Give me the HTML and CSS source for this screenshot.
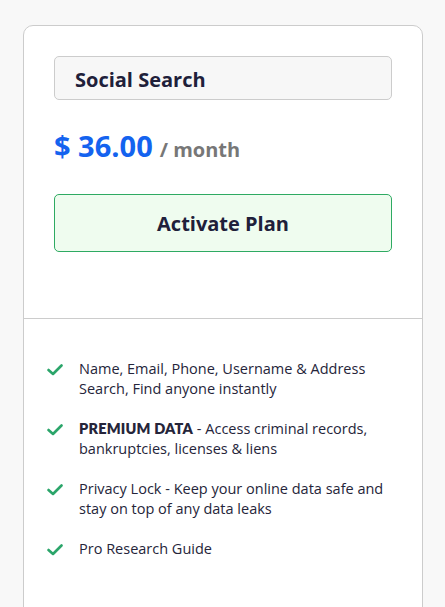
FILE: index.html
```html
<!DOCTYPE html>
<html>
<head>
<meta charset="utf-8">
<link rel="stylesheet" href="styles.css">
</head>
<body>
<div class="card">
  <div class="top">
    <div class="title">Social Search</div>
    <div class="price"><span class="amount">$ 36.00</span><span class="per">/ month</span></div>
    <button class="activate">Activate Plan</button>
  </div>
  <ul class="features">
    <li><svg class="check" viewBox="0 0 16 12"><polyline points="1.5,6 6,10 14.5,1.5"/></svg><span>Name, Email, Phone, Username &amp; Address Search, Find anyone instantly</span></li>
    <li><svg class="check" viewBox="0 0 16 12"><polyline points="1.5,6 6,10 14.5,1.5"/></svg><span><b>PREMIUM DATA</b> - Access criminal records, bankruptcies, licenses &amp; liens</span></li>
    <li><svg class="check" viewBox="0 0 16 12"><polyline points="1.5,6 6,10 14.5,1.5"/></svg><span>Privacy Lock - Keep your online data safe and stay on top of any data leaks</span></li>
    <li><svg class="check" viewBox="0 0 16 12"><polyline points="1.5,6 6,10 14.5,1.5"/></svg><span>Pro Research Guide</span></li>
  </ul>
</div>
</body>
</html>
```
FILE: styles.css
```css
html, body { margin: 0; padding: 0; }
body {
  background: #f8f8f8;
  font-family: "Open Sans", "Noto Sans", sans-serif;
  height: 607px;
  overflow: hidden;
}
.card {
  margin: 25px 0 0 23px;
  width: 398px;
  height: 700px;
  background: #fff;
  border: 1px solid #cccccc;
  border-radius: 10px;
}
.top {
  padding: 30px 30px 66px;
}
.title {
  box-sizing: border-box;
  height: 44px;
  background: #f7f7f7;
  border: 1px solid #cccccc;
  border-radius: 5px;
  padding: 3px 0 0 20px;
  font-size: 20px;
  font-weight: 700;
  line-height: 40px;
  color: #20203a;
}
.price {
  margin-top: 24px;
  display: flex;
  align-items: baseline;
  line-height: 44px;
}
.amount {
  font-size: 29px;
  font-weight: 700;
  color: #1463ef;
}
.per {
  margin-left: 7px;
  font-size: 20px;
  font-weight: 700;
  color: #777777;
}
.activate {
  display: block;
  box-sizing: border-box;
  width: 100%;
  height: 58px;
  margin-top: 22px;
  background: #effcef;
  border: 1px solid #2eaa62;
  border-radius: 5px;
  font-family: "Open Sans", "Noto Sans", sans-serif;
  font-size: 20px;
  font-weight: 700;
  color: #20203a;
  padding: 0;
}
.features {
  list-style: none;
  margin: 0;
  padding: 40px 23px 0;
  border-top: 1px solid #cccccc;
}
.features li {
  display: flex;
  align-items: flex-start;
  gap: 16px;
  margin-bottom: 20px;
  font-size: 14.5px;
  line-height: 20px;
  color: #25253a;
}
.features b {
  font-family: "Lato", sans-serif;
  font-weight: 800;
  letter-spacing: 0.2px;
}
.check {
  flex: none;
  width: 16px;
  height: 12px;
  margin-top: 5px;
}
.check polyline {
  fill: none;
  stroke: #2ba56a;
  stroke-width: 2.6;
  stroke-linecap: round;
  stroke-linejoin: round;
}
```
